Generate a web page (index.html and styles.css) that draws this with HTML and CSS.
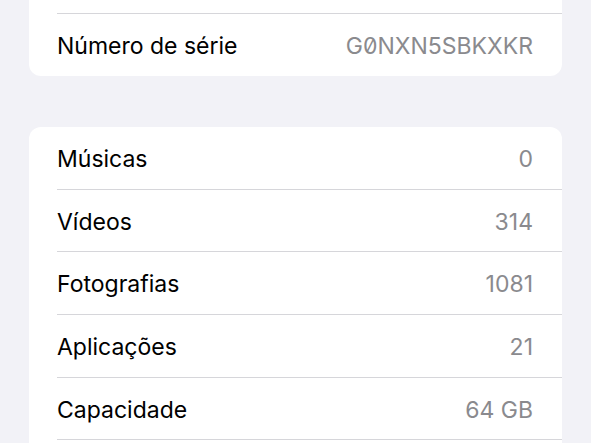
FILE: index.html
```html
<!DOCTYPE html>
<html lang="pt">
<head>
<meta charset="utf-8">
<title>Acerca de</title>
<link rel="stylesheet" href="styles.css">
</head>
<body>
<div class="page">
  <div class="card card-top">
    <div class="stub"></div>
    <div class="row last">
      <span class="label">Número de série</span>
      <span class="value serial">G0NXN5SBKXKR</span>
    </div>
  </div>
  <div class="card card-list">
    <div class="row"><span class="label">Músicas</span><span class="value">0</span></div>
    <div class="row"><span class="label">Vídeos</span><span class="value">314</span></div>
    <div class="row"><span class="label">Fotografias</span><span class="value">1081</span></div>
    <div class="row"><span class="label">Aplicações</span><span class="value">21</span></div>
    <div class="row"><span class="label">Capacidade</span><span class="value">64 GB</span></div>
  </div>
</div>
</body>
</html>
```
FILE: styles.css
```css
html, body {
  margin: 0;
  padding: 0;
  background: #f2f2f7;
  height: 100%;
  overflow: hidden;
}
.page {
  padding: 0 29px;
  font-family: Inter, "Noto Sans", sans-serif;
}
.card {
  background: #ffffff;
  border-radius: 12px;
  margin-top: 51px;
  overflow: hidden;
}
.card-top {
  margin-top: 0;
  border-radius: 0 0 12px 12px;
}
.card-list {
  padding-bottom: 40px;
}
.stub {
  height: 13px;
  margin-left: 28px;
  border-bottom: 1px solid #d6d6da;
}
.row {
  height: 62.7px;
  box-sizing: border-box;
  margin-left: 28px;
  padding-right: 29px;
  padding-top: 2px;
  display: flex;
  align-items: center;
  justify-content: space-between;
  border-bottom: 1px solid #d6d6da;
  font-size: 23px;
}
.row.last {
  border-bottom: none;
  height: 62px;
}
.label {
  color: #000000;
}
.value {
  color: #8a8a8e;
}
.serial {
  font-feature-settings: "zero" 1;
}
```
